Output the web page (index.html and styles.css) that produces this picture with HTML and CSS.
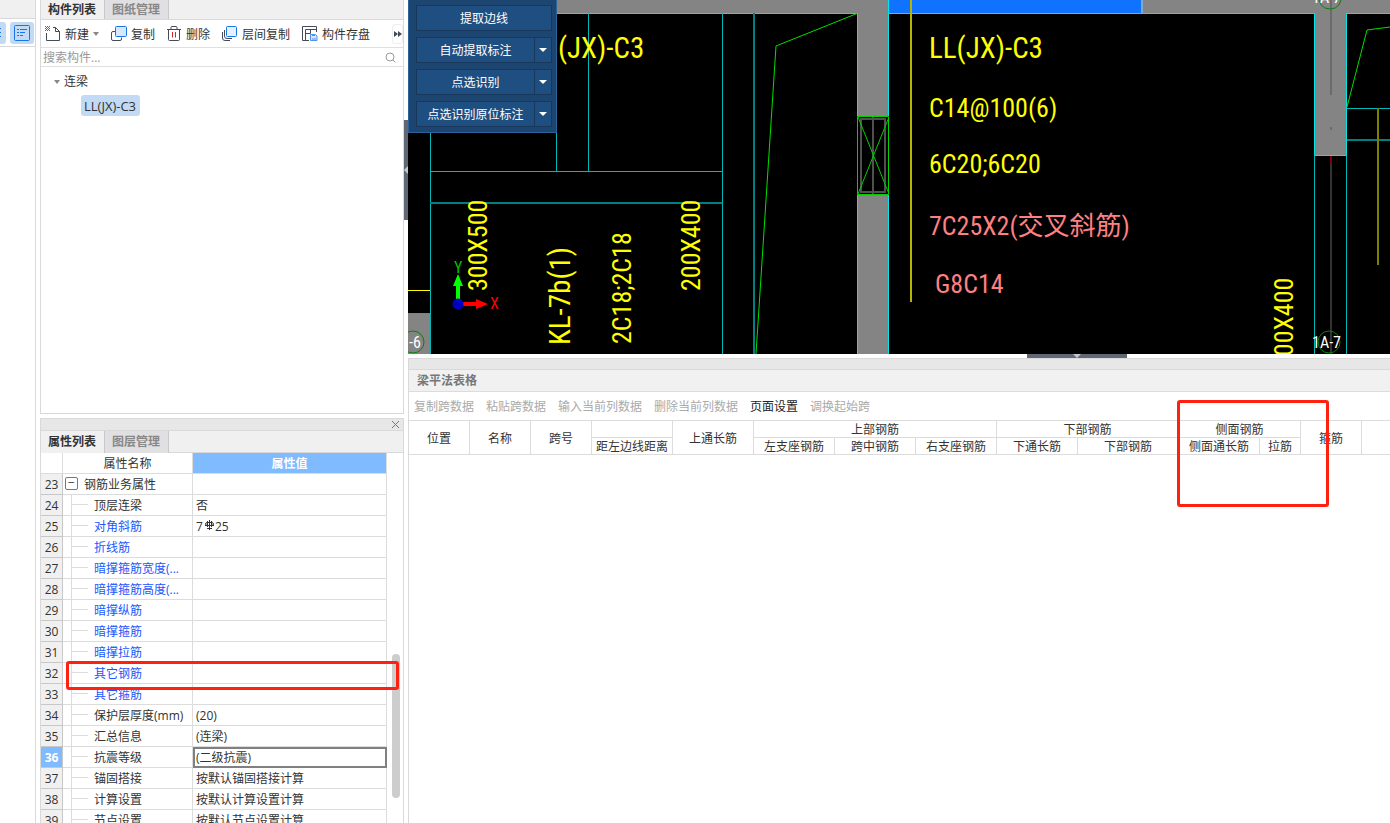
FILE: index.html
```html
<!DOCTYPE html>
<html lang="zh-CN">
<head>
<meta charset="utf-8">
<title>梁平法表格</title>
<link rel="stylesheet" href="styles.css">
</head>
<body>
<div class="app">
  <nav class="rail" aria-label="视图">
    <div class="rail-cap"></div>
    <div class="rail-tools">
      <button class="rail-btn rail-btn-cut" aria-label="列表"><svg width="6" height="22"><path d="M0 6.500h1M0 10.500h1M0 14.500h1" stroke="#1a73e8"/></svg></button>
      <button class="rail-btn" aria-label="属性"><svg width="16" height="16" fill="none" stroke="#1a73e8"><rect x=".5" y=".5" width="15" height="15" rx="1"/><path d="M3 4.500h2M6 4.500h7M3 7.500h2M6 7.500h5M3 10.500h2M6 10.500h3"/></svg></button>
    </div>
  </nav>

  <aside class="side">
    <section class="panel list-panel">
      <div class="tabs tabs-top">
        <button class="tab tab-on">构件列表</button><button class="tab">图纸管理</button>
      </div>
      <div class="toolbar">
        <button class="tool"><svg width="16" height="16" fill="none" stroke="#434a59"><path d="M1.500 7v7.500h13V5.500l-4-4H8M10.500 1.500v4h4"/><path d="M0 .5h1m1 0h1m1 0h1M1 1.500h1m1 0h1M0 2.500h1m1 0h1m1 0h1M1 3.500h1m1 0h1M0 4.500h1m1 0h1m1 0h1" stroke="#1a73e8"/></svg><span>新建</span><i class="drop"></i></button>
        <button class="tool"><svg width="16" height="16" fill="none" stroke="#434a59"><path d="M4 5.500H2q-1.500 0-1.500 1.500v6q0 1.500 1.500 1.500h7q1.500 0 1.500-1.500v-1.500"/><rect x="4.500" y=".5" width="11" height="10" rx="1" fill="#d6e8fd" stroke="#1a73e8"/></svg><span>复制</span></button>
        <button class="tool"><svg width="15" height="16" fill="none" stroke="#434a59"><path d="M0 3.500h14M4 3V1.500q0-1 1-1h4q1 0 1 1V3M1.500 4v9.500q0 1 1 1h9q1 0 1-1V4"/><path d="M5.500 6v5.500M8.500 6v5.500" stroke="#e02020"/></svg><span>删除</span></button>
        <button class="tool"><svg width="16" height="16" fill="none" stroke="#434a59"><path d="M.5 6v6q0 2.500 2.500 2.500h5M2.500 4v6q0 2.500 2.500 2.500h5"/><rect x="4.500" y=".5" width="10" height="10" rx="1" fill="#e6f1ff" stroke="#1a73e8"/></svg><span>层间复制</span></button>
        <button class="tool"><svg width="16" height="16" fill="none" stroke="#434a59"><path d="M7 14.500H.5V.5h14V6M3.500 14V3.500h11M3.500 7.500h5V4"/><path d="M8.500 8.500h5l1.500 1.500v4.500H8.500z" fill="#d6e8fd" stroke="#4c92ee"/><path d="M10 9.500h3M10 13h4" stroke="#4c92ee"/></svg><span>构件存盘</span></button>
        <button class="more" aria-label="更多"><svg width="8" height="6" fill="#434a59"><path d="M0 0l4 3-4 3zM4 0l4 3-4 3z"/></svg></button>
      </div>
      <label class="search">
        <input type="text" placeholder="搜索构件..." aria-label="搜索构件">
        <svg width="11" height="11" fill="none" stroke="#9a9a9a"><circle cx="5" cy="5" r="4"/><path d="M8 8l2.500 2.500"/></svg>
      </label>
      <ul class="tree">
        <li class="tree-group"><i class="drop"></i>连梁
          <ul><li><button class="chip">LL(JX)-C3</button></li></ul>
        </li>
      </ul>
    </section>

    <section class="panel prop-panel">
      <div class="grip"><button class="close" aria-label="关闭"><svg width="7" height="7" stroke="#777"><path d="M0 0l7 7M7 0L0 7"/></svg></button></div>
      <div class="tabs">
        <button class="tab tab-on">属性列表</button><button class="tab">图层管理</button>
      </div>
      <div class="prop-body">
        <table class="props">
          <colgroup><col class="c-num"><col class="c-name"><col></colgroup>
          <thead><tr><th></th><th>属性名称</th><th class="th-value">属性值</th></tr></thead>
          <tbody>
            <tr class="group"><th>23</th><td><span class="fold">−</span>钢筋业务属性</td><td></td></tr>
            <tr><th>24</th><td>顶层连梁</td><td>否</td></tr>
            <tr class="own"><th>25</th><td>对角斜筋</td><td>7<svg class="rebar" width="11" height="11" fill="none" stroke="#333"><path d="M5.500 0v10M1 5.500h9M3 8.500h5"/><path d="M3.500 2.500h4q2 0 2 1.500t-2 1.500h-4q-2 0-2-1.500t2-1.500zM3.500 1v6M7.500 1v6"/></svg>25</td></tr>
            <tr class="own"><th>26</th><td>折线筋</td><td></td></tr>
            <tr class="own"><th>27</th><td>暗撑箍筋宽度(...</td><td></td></tr>
            <tr class="own"><th>28</th><td>暗撑箍筋高度(...</td><td></td></tr>
            <tr class="own"><th>29</th><td>暗撑纵筋</td><td></td></tr>
            <tr class="own"><th>30</th><td>暗撑箍筋</td><td></td></tr>
            <tr class="own"><th>31</th><td>暗撑拉筋</td><td></td></tr>
            <tr class="own"><th>32</th><td>其它钢筋</td><td></td></tr>
            <tr class="own"><th>33</th><td>其它箍筋</td><td></td></tr>
            <tr><th>34</th><td>保护层厚度(mm)</td><td>(20)</td></tr>
            <tr><th>35</th><td>汇总信息</td><td>(连梁)</td></tr>
            <tr class="current"><th>36</th><td>抗震等级</td><td>(二级抗震)</td></tr>
            <tr><th>37</th><td>锚固搭接</td><td>按默认锚固搭接计算</td></tr>
            <tr><th>38</th><td>计算设置</td><td>按默认计算设置计算</td></tr>
            <tr><th>39</th><td>节点设置</td><td>按默认节点设置计算</td></tr>
          </tbody>
        </table>
        <div class="scroll"><div class="thumb"></div></div>
        <div class="mark mark-row"></div>
      </div>
    </section>
  </aside>

  <div class="split-v"><button class="handle-v" aria-label="收起侧栏"><svg width="4" height="8" fill="#c3c8ce"><path d="M4 0v8L0 4z"/></svg></button></div>

  <main class="main">
    <div class="canvas">
      <svg class="drawing" width="100%" height="100%" aria-label="图纸">
        <g fill="#848484">
          <rect x="148" width="100%" height="13"/>
          <rect x="449" y="13" width="32" height="341"/>
          <rect x="906" y="13" width="33" height="142"/>
          <rect y="313" width="22" height="41"/>
        </g>
        <rect x="480" width="254" height="13" fill="#0f73ff"/>
        <rect x="449" y="116" width="32" height="79"/>
        <path d="M453 119h24v73h-24zM465 117v77" fill="none" stroke="#505050" stroke-width="2"/>
        <path d="M449.500 116.500h31v78h-31zM450 117l31 77M481 117l-31 77" fill="none" stroke="#00d000"/>
        <path d="M148 13.500H449M480 13.500H906M939 13.500H2000M449.500 13v103M449.500 195v159M480.500 0v116M480.500 195v159M906.500 13v142M938.500 13v142M906 155.500h33" fill="none" stroke="#00e5e5"/>
        <path d="M22.500 132v222M148.500 132v39M180.500 13v158M314.500 13v341M22 171.500h292M906.500 155v199M938.500 155v199M939 108.500h1000M0 313.500h22" fill="none" stroke="#00b8b8"/>
        <path d="M22 203h292M346 13v341M939 140h1000" fill="none" stroke="#008080" stroke-width="2"/>
        <path d="M503 0v302" stroke="#b5b500" stroke-width="2"/>
        <path d="M970 108v157" stroke="#808000" stroke-width="2"/>
        <path d="M0 290.500h22" stroke="#ffff00"/>
        <path d="M734 0v13.500" stroke="#7fa8cf" stroke-width="2"/>
        <path d="M449 13.500L368 46l-20 308M939 107l20-77 23-3 30-4" fill="none" stroke="#00e000"/>
        <path d="M923 0v95M923 127v3" stroke="#6b6b6b" stroke-width="2"/>
        <path d="M923 157v197" stroke="#333" stroke-width="2"/>
        <path d="M923 156v8" stroke="#800010" stroke-width="2"/>
        <g fill="none" stroke="#0a800a"><path d="M910 -8q0 17 12 17t12-17"/><circle cx="921" cy="342" r="11"/><circle cx="5" cy="342" r="11"/></g>

        <g class="cad">
          <text x="150" y="58">(JX)-C3</text>
          <text x="521" y="58">LL(JX)-C3</text>
          <text transform="translate(162 345) rotate(-90)">KL-7b(1)</text>
        </g>
        <g class="cad cad-num">
          <text x="521" y="117">C14@100(6)</text>
          <text x="521" y="173">6C20;6C20</text>
          <text transform="translate(79 291) rotate(-90)">300X500</text>
          <text transform="translate(223 344) rotate(-90)">2C18;2C18</text>
          <text transform="translate(292 291) rotate(-90)">200X400</text>
          <text transform="translate(885 369) rotate(-90)">200X400</text>
        </g>
        <g class="cad cad-num cad-pink">
          <text x="521" y="235">7C25X2(交叉斜筋)</text>
          <text x="527" y="293">G8C14</text>
        </g>
        <g class="axis">
          <text x="904" y="348">1A-7</text>
          <text x="904" y="3">1A-7</text>
          <text x="1" y="348">-6</text>
          <text x="46" y="273" class="axis-y">Y</text>
          <text x="82" y="309" class="axis-x">X</text>
        </g>
        <path d="M48 285h4v18h-4zM45 286l5-12 5 12z" fill="#0f0"/>
        <path d="M52 302h16v4H52zM68 299l12 5-12 5z" fill="#f00"/>
        <circle cx="50" cy="304" r="5.500" fill="#0000c0"/>
      </svg>
      <div class="float">
        <div class="split"><button class="act">提取边线</button></div>
        <div class="split"><button class="act">自动提取标注</button><button class="act act-drop" aria-label="自动提取标注选项"><i class="tri"></i></button></div>
        <div class="split"><button class="act">点选识别</button><button class="act act-drop" aria-label="点选识别选项"><i class="tri"></i></button></div>
        <div class="split"><button class="act">点选识别原位标注</button><button class="act act-drop" aria-label="原位标注选项"><i class="tri"></i></button></div>
      </div>
    </div>
    <div class="split-h"><button class="handle-h" aria-label="收起表格"><svg width="8" height="4" fill="#c3c8ce"><path d="M0 0h8L4 4z"/></svg></button></div>
    <section class="beam">
      <div class="grip"></div>
      <h2 class="beam-title">梁平法表格</h2>
      <div class="beam-tools">
        <button disabled>复制跨数据</button><button disabled>粘贴跨数据</button><button disabled>输入当前列数据</button><button disabled>删除当前列数据</button><button>页面设置</button><button disabled>调换起始跨</button>
      </div>
      <table class="beam-table">
        <colgroup><col class="w61"><col class="w61"><col class="w61"><col class="w81"><col class="w81"><col class="w81"><col class="w81"><col class="w81"><col class="w81"><col class="w101"><col class="w81"><col class="w41"><col class="w61"><col></colgroup>
        <thead>
          <tr><th rowspan="2">位置</th><th rowspan="2">名称</th><th rowspan="2">跨号</th><th></th><th rowspan="2">上通长筋</th><th colspan="3">上部钢筋</th><th colspan="2">下部钢筋</th><th colspan="2">侧面钢筋</th><th rowspan="2">箍筋</th><th rowspan="2" class="rest"></th></tr>
          <tr><th>距左边线距离</th><th>左支座钢筋</th><th>跨中钢筋</th><th>右支座钢筋</th><th>下通长筋</th><th>下部钢筋</th><th>侧面通长筋</th><th>拉筋</th></tr>
        </thead>
      </table>
      <div class="mark mark-cols"></div>
    </section>
  </main>
</div>
</body>
</html>
```

FILE: styles.css
```css
* { box-sizing: border-box; }

body {
  margin: 0;
  background: #fff;
  color: #333;
  font: 12px/16px "Open Sans", "Noto Sans CJK SC", sans-serif;
}

button {
  display: inline-flex;
  align-items: center;
  margin: 0;
  padding: 0;
  border: 0;
  background: none;
  color: inherit;
  font: inherit;
  white-space: nowrap;
}

svg { flex: none; }

.app { display: flex; height: 100vh; overflow: hidden; }

.rail { flex: none; width: 36px; margin-right: 4px; border-right: 1px solid #d9d9d9; }
.rail-cap { height: 19px; background: #f0f0f0; border-bottom: 1px solid #d9d9d9; }
.rail-tools { display: flex; gap: 4px; height: 28px; padding-top: 3px; border-bottom: 1px solid #d9d9d9; }
.rail-btn { width: 24px; height: 22px; justify-content: center; border-radius: 3px; background: #c2daf3; }
.rail-btn-cut { width: 6px; border-radius: 0 3px 3px 0; }

.side { display: flex; flex: none; flex-direction: column; gap: 4px; width: 364px; }
.panel { border: 1px solid #d9d9d9; }
.list-panel { flex: none; height: 50.3vh; border-top: 0; }

.tabs { display: flex; height: 23px; background: #f0f0f0; border-bottom: 1px solid #d9d9d9; }
.tabs-top { height: 20px; align-items: flex-end; overflow: hidden; }
.tab {
  height: 22px;
  padding: 1px 8px 0 7px;
  border-right: 1px solid #c8c8c8;
  background: #e0e0e2;
  color: #888;
  font-weight: 700;
}
.tab-on { background: #f0f0f0; color: #333; }
.tabs-top .tab { padding-top: 3px; }

.toolbar { display: flex; align-items: center; height: 28px; gap: 12px; padding-left: 4px; border-bottom: 1px solid #e0e0e0; }
.tool { gap: 4px; }
.tool span { padding-top: 2px; }
.drop { width: 0; border: 3px solid transparent; border-top: 4px solid #888; border-bottom: 0; }
.more { justify-content: center; width: 11px; height: 20px; margin-left: auto; border: 1px solid #eee; border-radius: 3px; }

.search { display: flex; align-items: center; height: 19px; padding: 0 7px 0 2px; border-bottom: 1px solid #e0e0e0; }
.search input { flex: 1; min-width: 0; padding: 2px 0 0; border: 0; outline: 0; background: none; font: inherit; color: #333; }
.search input::placeholder { color: #999; }

.tree, .tree ul { margin: 0; padding: 0; list-style: none; }
.tree { padding: 7px 0 0 13px; }
.tree-group > .drop { display: inline-block; margin-right: 4px; vertical-align: 2px; }
.tree ul { padding: 5px 0 0 27px; }
.chip { height: 21px; padding: 0 4px 0 3px; border-radius: 3px; background: #c2daf3; font-size: 13px; }

.prop-panel { display: flex; flex: 1; flex-direction: column; min-height: 0; border-bottom: 0; }
.grip { flex: none; display: flex; justify-content: flex-end; height: 12px; padding-right: 4px; background: #e7e7e7; border-bottom: 1px solid #d9d9d9; }
.prop-panel .tabs { flex: none; height: 22px; }
.prop-body { position: relative; display: flex; flex: 1; align-items: flex-start; min-height: 0; }

.props { flex: 1; table-layout: fixed; border-collapse: separate; border-spacing: 0; }
.c-num { width: 22px; }
.c-name { width: 130px; }
.props th, .props td { height: 21px; padding: 2px 3px 0; border-right: 1px solid #dcdcdc; border-bottom: 1px solid #dcdcdc; font-weight: 400; line-height: 16px; white-space: nowrap; }
.props tbody th { padding: 2px 0 0; background: #f0f0f0; border-right-color: #c8c8c8; border-bottom-color: #c8c8c8; }
.props thead .th-value { background: #80bbff; color: #fff; font-weight: 700; }
.props td:nth-child(2) {
  padding-left: 31px;
  background:
    linear-gradient(#dcdcdc, #dcdcdc) 8px 0 / 1px 100% no-repeat,
    linear-gradient(#dcdcdc, #dcdcdc) 8px 9px / 17px 1px no-repeat;
}
.props .group td:nth-child(2) { padding-left: 2px; background: none; }
.fold {
  display: inline-block;
  width: 13px;
  height: 13px;
  margin-right: 6px;
  border: 1px solid #777;
  border-radius: 2px;
  line-height: 10px;
  text-align: center;
  vertical-align: 2px;
}
.props .own td:nth-child(2) { color: #1a56ff; }
.props .current th { background: #80bbff; color: #fff; font-weight: 700; }
.props .current td:last-child { outline: 2px solid #808080; outline-offset: -2px; }
.rebar { margin-left: 1px; }

.scroll { align-self: stretch; display: flex; justify-content: center; flex: none; width: 16px; padding: 201px 0 25px 2px; }
.thumb { width: 8px; border-radius: 4px; background: #cdcdcd; }

.mark { position: absolute; border: 3px solid #ff2010; border-radius: 3px; pointer-events: none; }
.mark-row { left: 25px; right: 4px; top: 208px; height: 29px; }
.mark-cols { left: 768px; top: 41px; width: 152px; height: 107px; }

.split-v { display: flex; flex: none; width: 4px; padding-top: 120px; }
.handle-v { width: 4px; height: 100px; background: #5f6874; }

.main { display: flex; flex: 1; flex-direction: column; min-width: 0; }
.canvas { position: relative; flex: none; height: 43vh; overflow: hidden; background: #000; }
.drawing { display: block; }
.cad { fill: #ff0; font: 29px "Roboto Condensed", "Liberation Sans Narrow", "Noto Sans CJK SC", sans-serif; }
.cad-num { font-size: 26px; }
.cad-pink { fill: #ff8080; }
.axis { fill: #fff; font: 16px "Roboto Condensed", "Liberation Sans", sans-serif; }
.axis-x { fill: #f00; }
.axis-y { fill: #00c000; }

.float {
  position: absolute;
  top: 0;
  left: 0;
  display: flex;
  flex-direction: column;
  gap: 6px;
  width: 149px;
  padding: 5px 4px 5px 7px;
  border: 1px solid #2a6299;
  border-top: 0;
  background: #1c456f;
  color: #fff;
}
.split { display: flex; height: 26px; border: 1px solid #17375c; background: #1f4e80; }
.act { flex: 1; justify-content: center; padding-top: 1px; }
.act-drop { flex: none; width: 17px; padding: 0; border-left: 1px solid #17375c; }
.tri { width: 0; border: 4px solid transparent; border-top-color: #fff; border-bottom: 0; }

.split-h { display: flex; flex: none; justify-content: center; height: 4px; padding-left: 356px; }
.handle-h { justify-content: center; width: 100px; height: 4px; background: #5f6874; }

.beam { position: relative; flex: 1; min-height: 0; border-top: 1px solid #d9d9d9; border-left: 1px solid #d9d9d9; }
.beam .grip { height: 11px; }
.beam-title { height: 22px; margin: 0; padding: 3px 8px; background: #f1f1f1; border-bottom: 1px solid #dcdcdc; color: #777; font-size: 12px; line-height: 16px; }
.beam-tools { display: flex; gap: 12px; height: 28px; padding: 2px 0 0 5px; overflow: hidden; }
.beam-tools button { color: #222; }
.beam-tools button:disabled { color: #aaa; }

.beam-table { width: 100%; table-layout: fixed; border-collapse: separate; border-spacing: 0; border-top: 1px solid #dcdcdc; }
.beam-table th { height: 17px; padding: 1px 0 0; border-right: 1px solid #dcdcdc; border-bottom: 1px solid #dcdcdc; font-weight: 400; line-height: 15px; white-space: nowrap; }
.beam-table th[rowspan] { padding-top: 3px; }
.beam-table .rest { border-right: 0; }
.w41 { width: 41px; }
.w61 { width: 61px; }
.w81 { width: 81px; }
.w101 { width: 101px; }
```
